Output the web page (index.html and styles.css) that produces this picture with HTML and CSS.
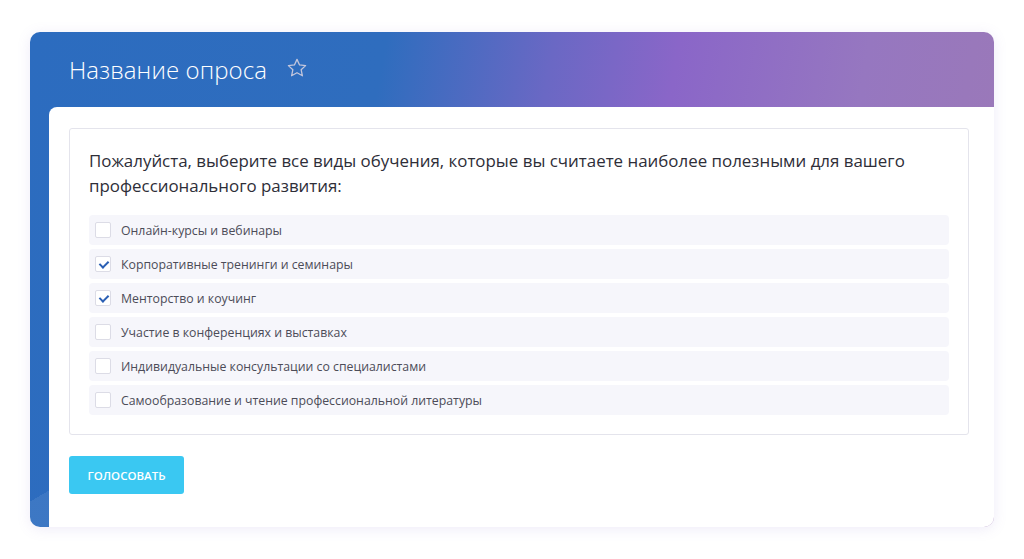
FILE: index.html
```html
<!DOCTYPE html>
<html lang="ru">
<head>
    <meta charset="UTF-8">
    <meta name="viewport" content="width=device-width, initial-scale=1.0">
    <title>Название опроса</title>
    <link rel="stylesheet" href="styles.css">
</head>
<body>

    <div class="poll-card">
        <div class="poll-header">
            <h1 class="poll-title">Название опроса</h1>
            <!-- favourite toggle -->
            <svg class="star" width="22" height="22" viewBox="0 0 24 24">
                <path d="M12 2.6l2.8 6.1 6.6.7-4.9 4.5 1.4 6.6L12 17.2l-5.9 3.3 1.4-6.6-4.9-4.5 6.6-.7z"
                      fill="none" stroke="#c3c6dc" stroke-width="1.4" stroke-linejoin="round"/>
            </svg>
        </div>

        <div class="poll-body">
            <div class="question-box">
                <p class="question">Пожалуйста, выберите все виды обучения, которые вы считаете наиболее полезными для вашего профессионального развития:</p>

                <ul class="options">
                    <li class="option"><span class="check"></span>Онлайн-курсы и вебинары</li>
                    <li class="option"><span class="check checked"></span>Корпоративные тренинги и семинары</li>
                    <li class="option"><span class="check checked"></span>Менторство и коучинг</li>
                    <li class="option"><span class="check"></span>Участие в конференциях и выставках</li>
                    <li class="option"><span class="check"></span>Индивидуальные консультации со специалистами</li>
                    <li class="option"><span class="check"></span>Самообразование и чтение профессиональной литературы</li>
                </ul>
            </div>

            <button class="vote-btn">Голосовать</button>
        </div>
    </div>

</body>
</html>
```

FILE: styles.css
```css
* {
    margin: 0;
    padding: 0;
    box-sizing: border-box;
}

body {
    font-family: 'Open Sans', 'Noto Sans', sans-serif;
    background-color: #ffffff;
    color: #333;
    padding: 32px 30px 32px 30px;
}

.poll-card {
    width: 964px;
    height: 495px;
    border-radius: 10px;
    overflow: hidden;
    display: flex;
    flex-direction: column;
    padding-left: 19px;
    background:
        linear-gradient(142deg, transparent 0 78%, rgba(255, 255, 255, 0.07) 78% 100%),
        linear-gradient(150deg, transparent 0 55%, rgba(255, 255, 255, 0.08) 55%) left bottom / 19px 70px no-repeat,
        linear-gradient(100deg, #2c6cbf 0%, #2f6dbe 34%, #6a68c4 50%, #8a66c8 62%, #9677c0 80%, #9c79b6 100%);
    box-shadow: 0 2px 14px rgba(120, 100, 200, 0.13);
}

.poll-header {
    height: 75px;
    display: flex;
    align-items: center;
    padding-left: 20px;
    gap: 19px;
}

.poll-title {
    font-size: 24px;
    font-weight: 300;
    color: #ffffff;
    letter-spacing: 0.1px;
}

.star {
    margin-top: -3px;
}

.poll-body {
    flex: 1;
    background-color: #ffffff;
    border-top-left-radius: 8px;
    padding: 21px 25px 0 20px;
}

.question-box {
    border: 1px solid #e4e4ec;
    border-radius: 3px;
    padding: 19px 19px 19px 19px;
}

.question {
    font-size: 16.9px;
    line-height: 25px;
    color: #2e2e38;
    margin-bottom: 17px;
}

.options {
    list-style: none;
    display: flex;
    flex-direction: column;
    gap: 4px;
}

.option {
    height: 30px;
    display: flex;
    align-items: center;
    gap: 10px;
    padding-left: 6px;
    padding-top: 1px;
    background-color: #f6f6fb;
    border-radius: 4px;
    font-size: 12.3px;
    color: #4c4c58;
}

.check {
    width: 16px;
    height: 16px;
    margin-top: -1px;
    background-color: #ffffff;
    border: 1px solid #dcdce6;
    border-radius: 2px;
    position: relative;
}

.check.checked::after {
    content: '';
    position: absolute;
    left: 4.5px;
    top: 2px;
    width: 4px;
    height: 7px;
    border-right: 2px solid #2a5fb4;
    border-bottom: 2px solid #2a5fb4;
    transform: rotate(45deg);
}

.vote-btn {
    margin-top: 21px;
    width: 115px;
    height: 38px;
    background-color: #3ac8f2;
    color: #ffffff;
    border: none;
    border-radius: 3px;
    font-family: 'Open Sans', sans-serif;
    font-size: 11.5px;
    font-weight: 600;
    text-transform: uppercase;
    cursor: pointer;
}
```
